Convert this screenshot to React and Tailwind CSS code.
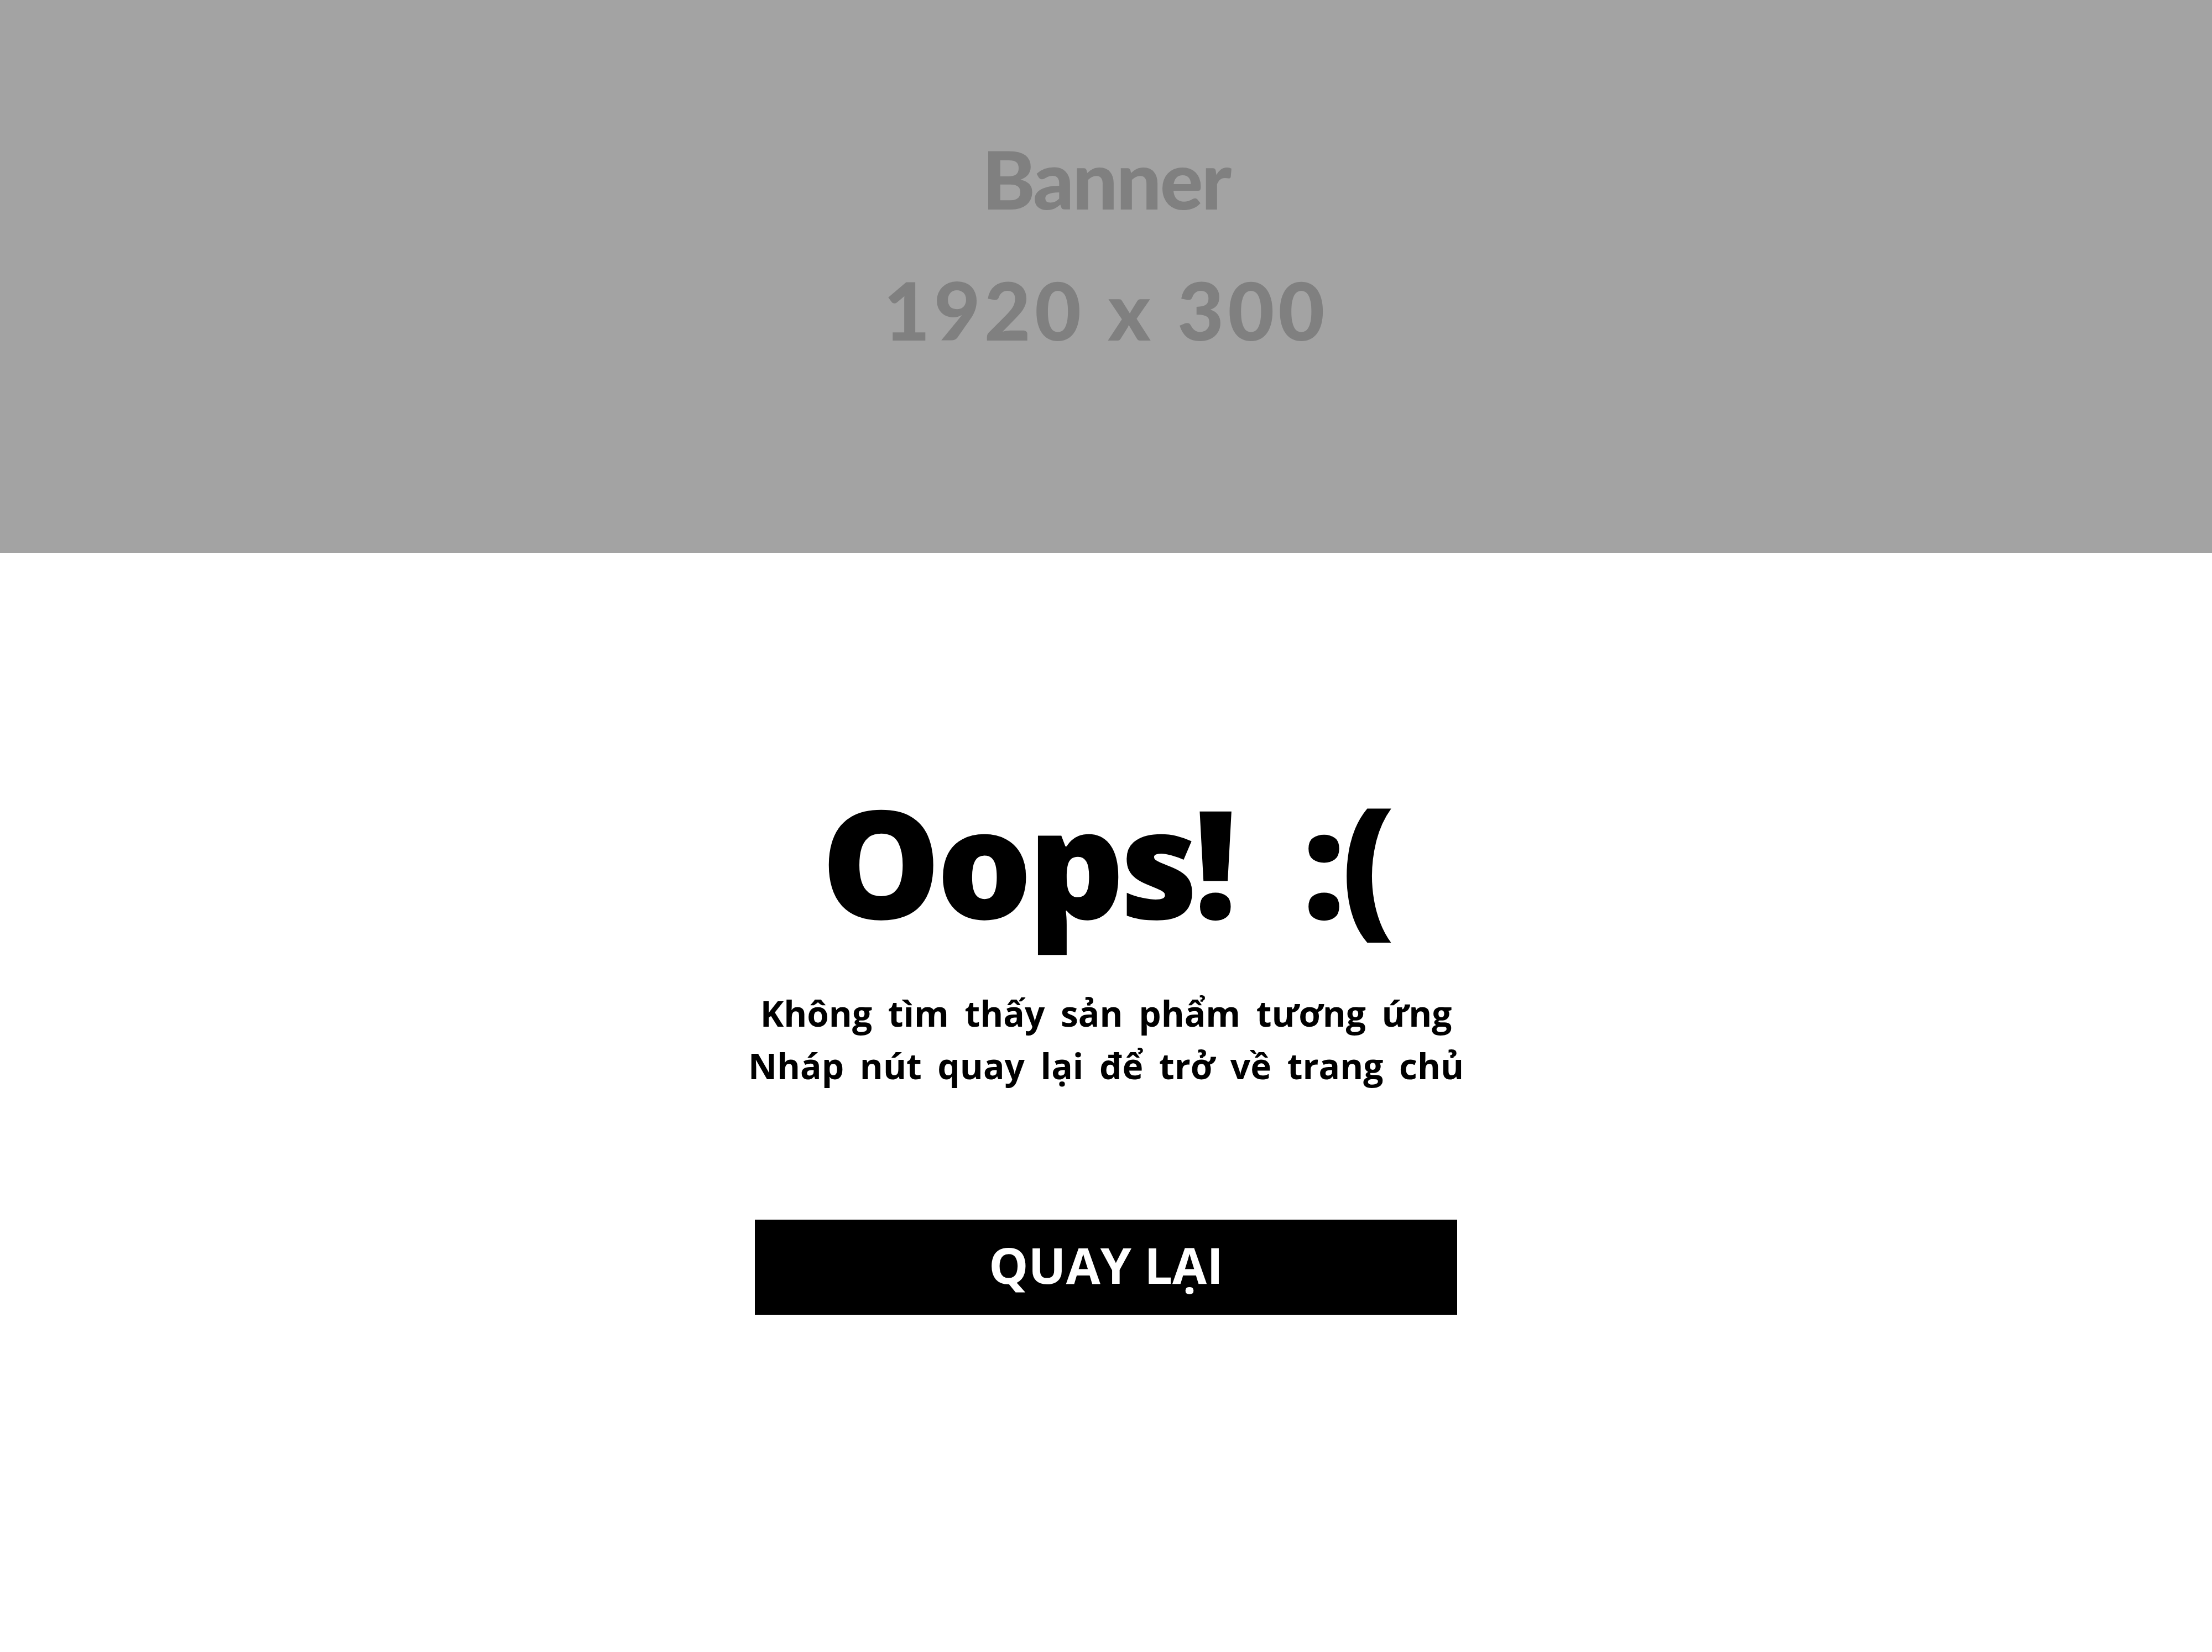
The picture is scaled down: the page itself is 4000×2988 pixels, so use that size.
export default function App() {
  return (
    <div className="min-h-[2988px] w-full bg-white">
      <div className="h-[1000px] w-full bg-[#a3a3a3] flex flex-col items-center pt-[251px] font-['Lato',sans-serif] text-[#808080]">
        <div className="text-[145px] leading-none font-black tracking-[-3px]">Banner</div>
        <div className="mt-[92px] text-[145px] leading-none font-black tracking-[7px]">1920 x 300</div>
      </div>
      <div className="flex flex-col items-center pt-[421px] font-['Open_Sans',sans-serif] text-black">
        <h1 className="text-[272px] leading-none font-extrabold tracking-[-8px]">Oops!&nbsp;&nbsp;:(</h1>
        <div className="mt-[92px] text-[64px] leading-[95px] font-bold text-center [word-spacing:12px]">
          <p>Không tìm thấy sản phẩm tương ứng</p>
          <p>Nháp nút quay lại để trở về trang chủ</p>
        </div>
        <button className="mt-[231px] w-[1270px] h-[172px] pb-[10px] bg-black text-white text-[90px] leading-none font-bold">
          QUAY LẠI
        </button>
      </div>
    </div>
  );
}
